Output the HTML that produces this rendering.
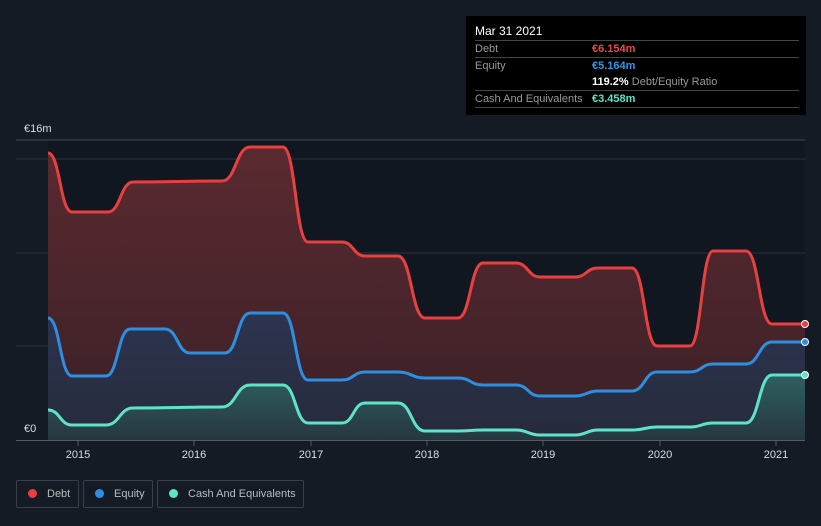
<!DOCTYPE html>
<html style="overflow:hidden"><head><meta charset="utf-8"><style>
body{margin:0;background:#151b25;width:821px;height:526px;overflow:hidden;font-family:"Liberation Sans",sans-serif;}
.tt{position:absolute;left:466px;top:16px;width:340px;height:99px;background:#000;}
.tt .h{position:absolute;left:9px;top:8px;color:#fff;font-size:12px}
.row{position:absolute;left:9px;width:324px;border-top:1px solid #444;font-size:11px;color:#999;height:16px;line-height:16px}
.row span{position:absolute;left:117px;font-weight:bold}
.lg{position:absolute;top:480px;border:1px solid #3a3f48;border-radius:2px;color:#bbb;font-size:11px;line-height:26px;box-sizing:border-box;height:28px;white-space:nowrap}
.lg i{display:inline-block;width:9px;height:9px;border-radius:50%;margin:0 10px 0 11px;vertical-align:-1px}
</style></head><body>
<svg width="821" height="526" style="position:absolute;left:0;top:0">
<defs>
<linearGradient id="gd" x1="0" y1="0" x2="0" y2="1"><stop offset="0" stop-color="#5a2a30"/><stop offset="1" stop-color="#3a2027"/></linearGradient>
<linearGradient id="ge" x1="0" y1="0" x2="0" y2="1"><stop offset="0" stop-color="#2c3450"/><stop offset="1" stop-color="#262a3a"/></linearGradient>
<linearGradient id="gc" x1="0" y1="0" x2="0" y2="1"><stop offset="0" stop-color="#2f6060"/><stop offset="1" stop-color="#26363f"/></linearGradient>
</defs>
<rect x="48" y="140" width="757" height="300" fill="#111720"/>
<line x1="16" y1="140" x2="805" y2="140" stroke="#444a52"/>
<line x1="16" y1="159" x2="805" y2="159" stroke="#2a3038"/>
<line x1="16" y1="253" x2="805" y2="253" stroke="#2a3038"/>
<line x1="16" y1="346" x2="805" y2="346" stroke="#2a3038"/>
<g id="g"></g>
<line x1="16" y1="440.5" x2="805" y2="440.5" stroke="#555b63"/>
<g stroke="#555b63"><line x1="78" y1="440" x2="78" y2="446"/><line x1="194" y1="440" x2="194" y2="446"/><line x1="311" y1="440" x2="311" y2="446"/><line x1="427" y1="440" x2="427" y2="446"/><line x1="543" y1="440" x2="543" y2="446"/><line x1="660" y1="440" x2="660" y2="446"/><line x1="776" y1="440" x2="776" y2="446"/></g>
<g fill="#ddd" font-size="11" text-anchor="middle" font-family="Liberation Sans"><text x="78" y="458">2015</text><text x="194" y="458">2016</text><text x="311" y="458">2017</text><text x="427" y="458">2018</text><text x="543" y="458">2019</text><text x="660" y="458">2020</text><text x="776" y="458">2021</text></g>
<text x="24" y="132" fill="#ddd" font-size="11" font-family="Liberation Sans">€16m</text>
<text x="24" y="432" fill="#ddd" font-size="11" font-family="Liberation Sans">€0</text>
</svg>
<div class="tt"><div class="h">Mar 31 2021</div>
<div class="row" style="top:24px">Debt<span style="color:#e84a4a">€6.154m</span></div>
<div class="row" style="top:41px">Equity<span style="color:#2e98e8">€5.164m</span></div>
<div class="row" style="top:58px;border:none"><span style="color:#fff">119.2% <b style="color:#999;font-weight:normal">Debt/Equity Ratio</b></span></div>
<div class="row" style="top:74px">Cash And Equivalents<span style="color:#5fe3c8">€3.458m</span></div>
<div class="row" style="top:91px;height:0"></div>
</div>
<div class="lg" style="left:16px;width:63px"><i style="background:#e84040"></i>Debt</div>
<div class="lg" style="left:83px;width:70px"><i style="background:#2e8fe0"></i>Equity</div>
<div class="lg" style="left:157px;width:147px"><i style="background:#5fe3c8"></i>Cash And Equivalents</div>
<script>
var D=[[48,153],[72,212],[108,212],[133,182],[222,181],[250,147],[283,147],[308,242],[342,242],[365,256],[398,256],[425,318],[458,318],[483,263],[516,263],[540,277],[575,277],[598,268],[632,268],[657,346],[690,346],[713,251],[746,251],[772,324],[805,324]];
var E=[[48,318],[72,376],[106,376],[130,329],[165,329],[190,353],[225,353],[250,313],[283,313],[308,380],[342,380],[365,372],[398,372],[425,378],[458,378],[483,385],[516,385],[540,396],[575,396],[598,391],[632,391],[657,372],[690,372],[713,364],[746,364],[772,342],[805,342]];
var C=[[48,410],[72,425],[106,425],[133,408],[222,407],[250,385],[283,385],[308,423],[342,423],[365,403],[398,403],[425,431],[458,431],[483,430],[516,430],[540,435],[575,435],[598,430],[632,430],[657,427],[690,427],[713,423],[746,423],[772,375],[805,375]];
function p(a){var s="M"+a[0];for(var i=1;i<a.length;i++){var m=(a[i-1][0]+a[i][0])/2;s+="C"+m+","+a[i-1][1]+" "+m+","+a[i][1]+" "+a[i];}return s;}
var h="";
[[D,"url(#gd)"],[E,"url(#ge)"],[C,"url(#gc)"]].forEach(function(t){h+='<path d="'+p(t[0])+'L805,440L48,440Z" fill="'+t[1]+'"/>';});
[[D,"#e84040"],[E,"#2e8fe0"],[C,"#5fe3c8"]].forEach(function(t){h+='<path d="'+p(t[0])+'" fill="none" stroke="'+t[1]+'" stroke-width="3"/>';var l=t[0][t[0].length-1];h+='<circle cx="805" cy="'+l[1]+'" r="3.5" fill="'+t[1]+'" stroke="#fff" stroke-width="1"/>';});
document.getElementById("g").innerHTML=h;
</script>
</body></html>
